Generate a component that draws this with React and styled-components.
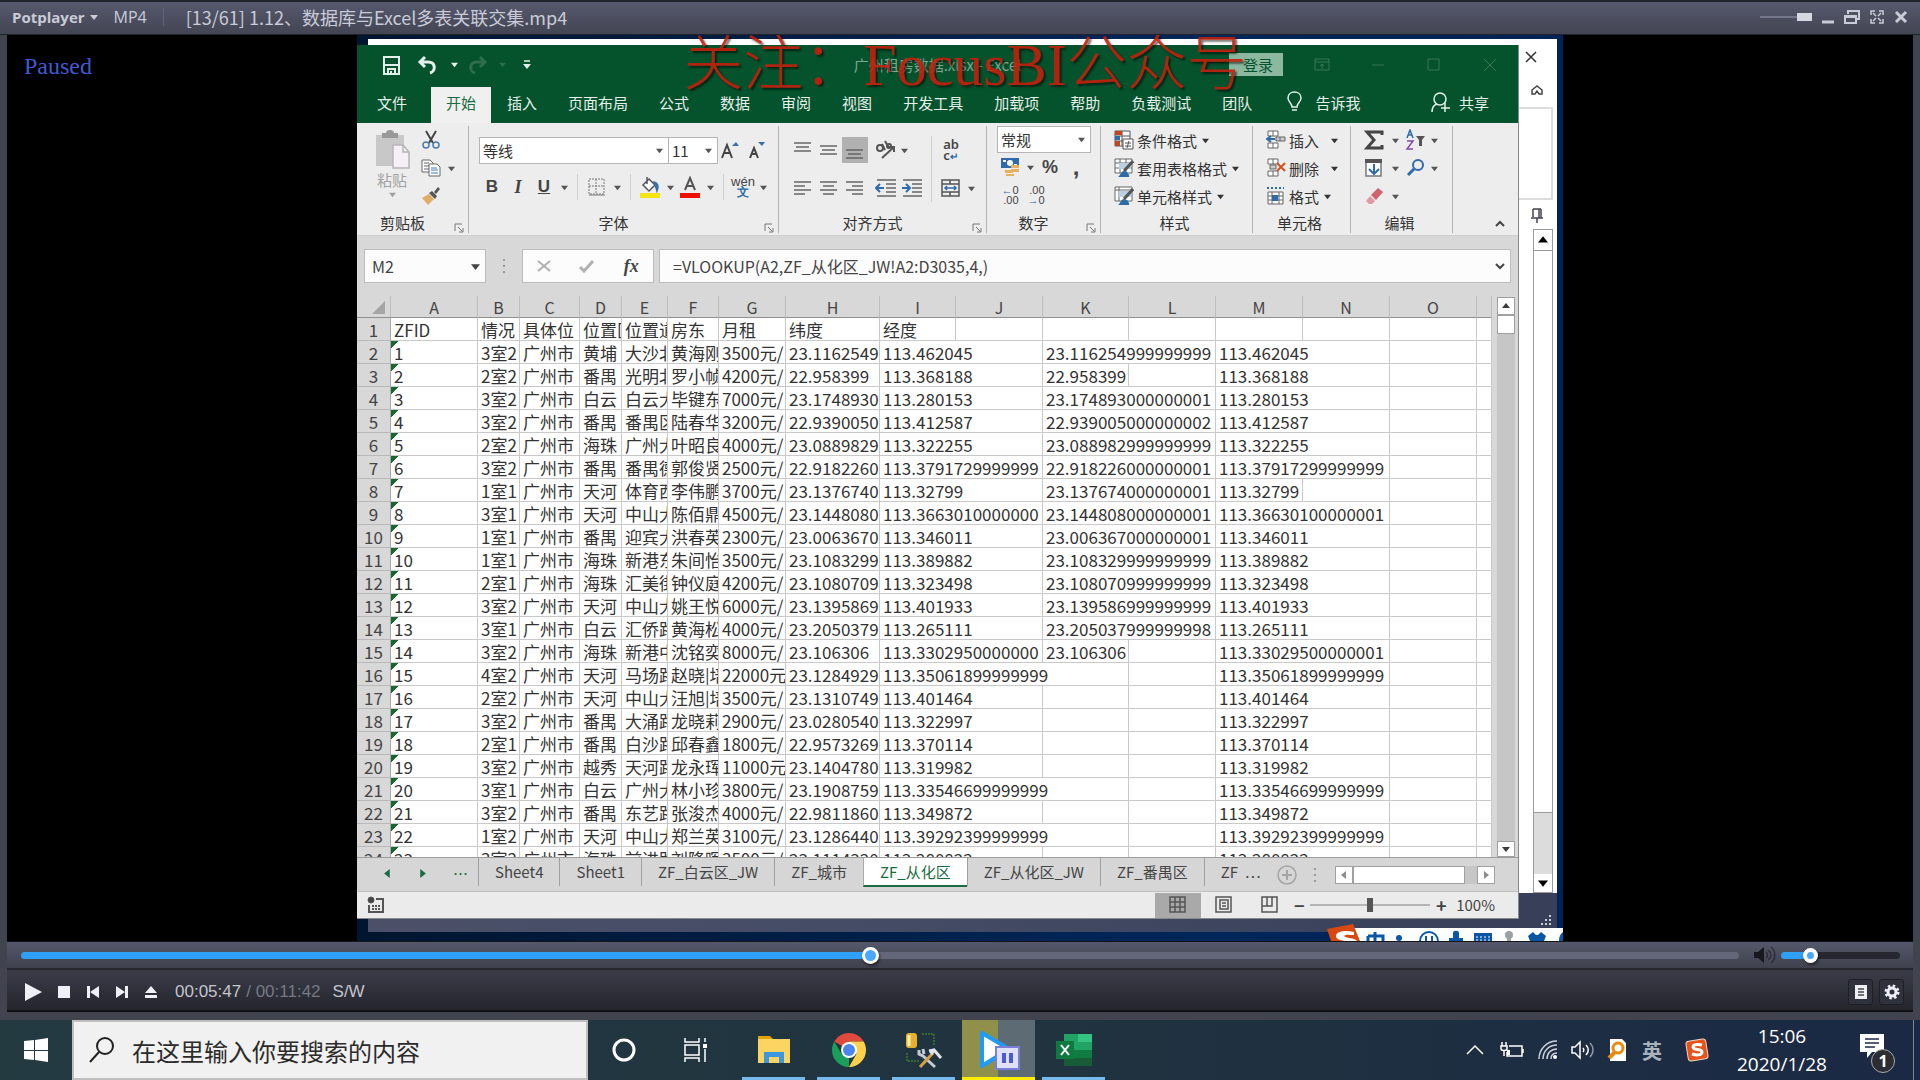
import React, { useState } from "react";
import styled, { createGlobalStyle } from "styled-components";

const GlobalStyle = createGlobalStyle`
  * {
    box-sizing: border-box;
  }

  body {
    margin: 0;
    background: #000;
    font-family: "Noto Sans CJK SC", "Noto Sans", sans-serif;
    font-size: 15px;
  }

  button,
  input,
  select {
    margin: 0;
    padding: 0;
    border: 0;
    background: none;
    color: inherit;
    font: inherit;
  }
`;

const Page = styled.div`
  display: flex;
  flex-direction: column;
  height: 100vh;
  overflow: hidden;
`;

/* ---------- Player ---------- */

const Player = styled.main`
  flex: 1;
  min-height: 0;
  display: flex;
  flex-direction: column;
  padding: 0 7px 8px;
  background: #41434f;
  border-top: 2px solid #22242c;
`;

const PlayerTitle = styled.header`
  display: flex;
  align-items: center;
  height: 33px;
  margin: 0 -7px;
  padding: 0 12px 2px;
  background: linear-gradient(#56596d, #434553);
  border-bottom: 1px solid #22232b;
  color: #c9cbd8;
  font-family: "Open Sans", "Noto Sans CJK SC", sans-serif;
`;

const BrandButton = styled.button`
  display: flex;
  align-items: center;
  gap: 5px;
  font-size: 15px;
  font-weight: 700;
`;

const Format = styled.span`
  margin-left: 16px;
  padding-right: 16px;
  border-right: 1px solid #5f6274;
  font-size: 16px;
  line-height: 18px;
`;

const FileName = styled.h1`
  flex: 1;
  margin: 0 0 0 22px;
  font-family: "Noto Sans CJK SC", sans-serif;
  font-size: 18px;
  font-weight: 400;
`;

const WindowButtons = styled.div`
  display: flex;
  align-items: center;
  gap: 10px;
`;

const PlainButton = styled.button`
  display: flex;
  align-items: center;
  justify-content: center;
`;

const Stage = styled.section`
  flex: 1;
  min-height: 0;
  display: grid;
  grid-template-columns: 350px minmax(0, 1fr) 350px;
  background: #000;
`;

const PlayState = styled.p`
  margin: 16px 0 0 17px;
  color: #4059cf;
  font-family: "Liberation Serif", serif;
  font-size: 24px;
  line-height: 30px;
`;

const SeekRow = styled.div`
  display: flex;
  align-items: center;
  height: 29px;
  padding: 0 13px 0 14px;
  background: linear-gradient(#55586b, #3f414d);
  border-top: 1px solid #15161b;
  border-bottom: 2px solid #25262e;
`;

const Range = styled.input`
  flex: ${(props) => (props.$grow ? 1 : "none")};
  width: ${(props) => props.$width || "auto"};
  height: 18px;
  appearance: none;
  cursor: pointer;

  &::-webkit-slider-runnable-track {
    height: ${(props) => props.$track}px;
    border-radius: 4px;
    background: linear-gradient(
      to right,
      ${(props) => props.$on} ${(props) => props.$fill}%,
      ${(props) => props.$off} ${(props) => props.$fill}%
    );
  }

  &::-webkit-slider-thumb {
    appearance: none;
    width: ${(props) => props.$thumb}px;
    height: ${(props) => props.$thumb}px;
    margin-top: ${(props) => (props.$track - props.$thumb) / 2}px;
    border: ${(props) => (props.$thumb > 15 ? 3 : 4)}px solid #fff;
    border-radius: 50%;
    background: #4aa8f8;
    box-shadow: 1px 2px 3px rgba(0, 0, 0, 0.5);
  }
`;

const VolumeIcon = styled.span`
  display: flex;
  margin: 0 5px 0 13px;
`;

const ControlRow = styled.div`
  display: flex;
  align-items: center;
  height: 42px;
  padding: 3px 9px 0 17px;
  background: linear-gradient(#3a3c48, #24252d);
  border-bottom: 2px solid #111216;
`;

const Transport = styled.div`
  display: flex;
  align-items: center;
  gap: 11px;

  button:first-child {
    margin-right: 2px;
  }
`;

const Clock = styled.div`
  flex: 1;
  display: flex;
  margin-left: 15px;
  color: #c3c4cc;
  font-family: "Liberation Sans", sans-serif;
  font-size: 17px;
`;

const Duration = styled.span`
  margin: 0 12px 0 5px;
  color: #777985;
`;

const PanelButton = styled(PlainButton)`
  width: 25px;
  height: 26px;
  margin-left: 6px;
  border: 1px solid #1e1f25;
  border-radius: 3px;
  background: #2f313c;
`;

/* ---------- Recorded desktop ---------- */

const Desktop = styled.div`
  display: grid;
  grid-template: minmax(0, 1fr) / minmax(0, 1fr);
  overflow: hidden;
  background: linear-gradient(to right, #00152f, #00275a 70%, #002357);
  position: relative;

  > * {
    grid-area: 1 / 1;
  }
`;

const BackWindow = styled.div`
  display: flex;
  flex-direction: column;
  margin: 4px 6px 9px 11px;
  background: #fff;
`;

const BackStrip = styled.div`
  flex: 1;
  align-self: flex-end;
  display: flex;
  flex-direction: column;
  align-items: flex-end;
  width: 38px;
  padding-right: 4px;
`;

const BackIcons = styled.div`
  display: flex;
  flex-direction: column;
  justify-content: space-between;
  width: 34px;
  height: 60px;
  padding: 12px 0 3px 6px;

  svg:last-child {
    margin-left: 6px;
  }
`;

const BackPanel = styled.div`
  width: 34px;
  height: 93px;
  margin: 8px 0;
  border: 2px solid #dcdcdc;
  border-left: 0;
`;

const PinSlot = styled.div`
  display: flex;
  padding-right: 5px;
`;

const BackScroll = styled.div`
  flex: 1;
  display: flex;
  flex-direction: column;
  width: 20px;
  margin-top: 5px;
  border: 1px solid #9b9b9b;
  background: #dcdcdc;
`;

const BackThumb = styled.div`
  flex: 1;
  margin-bottom: 61px;
  border: 1px solid #9b9b9b;
  border-width: 1px 0;
  background: #fff;
`;

const BackStatus = styled.div`
  display: flex;
  justify-content: flex-end;
  height: 39px;
  padding: 22px 4px 0;
  background: linear-gradient(to right, #4b5068, #454c66 40%, #384059);
`;

const ScrollButton = styled(PlainButton)`
  flex: none;
  width: 18px;
  height: ${(props) => props.$h || 18}px;
  border: ${(props) => (props.$flat ? 0 : 1)}px solid #a0a0a0;
  background: #fff;
`;

const Watermark = styled.div`
  z-index: 2;
  justify-self: center;
  align-self: start;
  padding-left: 10px;
  color: #c3200c;
  font-family: "Liberation Serif", "Noto Sans CJK SC", serif;
  font-size: 60px;
  font-weight: 300;
  line-height: 60px;
  text-shadow: 2px 2px 2px rgba(0, 0, 0, 0.6);
  white-space: nowrap;
  opacity: 0.9;
  pointer-events: none;
`;

const ImeBar = styled.div`
  position: absolute;
  right: 0;
  bottom: 0;
  display: flex;
  align-items: flex-start;
  width: 236px;
  height: 17px;
  overflow: hidden;
`;

/* ---------- Spreadsheet window ---------- */

const Excel = styled.section`
  z-index: 1;
  display: flex;
  flex-direction: column;
  min-width: 0;
  margin: 10px 44px 22px 0;
  border-right: 1px solid #8a8a8a;
  border-bottom: 1px solid #8a8a8a;
  background: #d8d8d8;
  color: #3c3c3c;
`;

const GreenBar = styled.div`
  background: #04532d;
  color: #e6f0ea;
`;

const ExcelTitle = styled.div`
  display: grid;
  grid-template-columns: 1fr auto 1fr;
  align-items: center;
  height: 42px;
  padding-bottom: 3px;
`;

const QuickAccess = styled.div`
  display: flex;
  align-items: center;
  padding-left: 24px;
`;

const DocTitle = styled.h2`
  margin: 0;
  color: #7da690;
  font-size: 15px;
  font-weight: 400;
`;

const ExcelControls = styled.div`
  display: flex;
  align-items: center;
  justify-content: flex-end;
`;

const LoginButton = styled.button`
  width: 54px;
  height: 23px;
  margin-right: 11px;
  padding-left: 4px;
  background: #8db8a0;
  color: #04532d;
  font-size: 15px;
  line-height: 22px;
`;

const ChromeButton = styled(PlainButton)`
  width: 56px;
  color: #3a7757;
`;

const RibbonTabs = styled.nav`
  display: flex;
  align-items: stretch;
  gap: 1px;
  height: 36px;
  padding: 0 14px 0 5px;
`;

const RibbonTab = styled.button`
  display: flex;
  align-items: center;
  gap: 8px;
  padding: 0 15px 6px;
  margin-right: ${(props) => props.$after || 0}px;
  margin-left: ${(props) => props.$before || 0};
  background: ${(props) => (props.$active ? "#f0f0f0" : "transparent")};
  color: ${(props) => (props.$active ? "#1a6b41" : "#e6f0ea")};
  white-space: nowrap;
`;

const Ribbon = styled.div`
  display: flex;
  height: 113px;
  padding: 3px 0 2px;
  background: #ededed;
  border-bottom: 1px solid #cfcfcf;
`;

const Group = styled.div`
  flex: none;
  display: flex;
  flex-direction: column;
  width: ${(props) => props.$width}px;
  border-right: 1px solid #b4b4b4;
`;

const GroupBody = styled.div`
  flex: 1;
  display: flex;
  flex-direction: ${(props) => (props.$row ? "row" : "column")};
  gap: ${(props) => props.$gap || 0}px;
  padding: ${(props) => props.$pad || "0 0 0 10px"};
`;

const GroupLabel = styled.div`
  display: flex;
  height: 20px;
  padding-right: 4px;
  color: #333;
  line-height: 20px;

  svg {
    flex: none;
    align-self: flex-end;
    margin-left: 6px;
  }

  span {
    flex: 1;
    text-align: center;
  }
`;

const Stack = styled.div`
  display: flex;
  flex-direction: column;
  gap: ${(props) => props.$gap || 0}px;
`;

const ToolRow = styled.div`
  display: flex;
  align-items: center;
  height: ${(props) => props.$h || 28}px;
`;

const Tool = styled(PlainButton)`
  width: 26px;
  height: 26px;
  background: ${(props) => (props.$active ? "#b1b1b1" : "transparent")};
  color: #444;
  font-family: "Liberation Sans", sans-serif;
  font-size: ${(props) => props.$size || 17}px;
  font-weight: ${(props) => (props.$bold ? 700 : 400)};
  font-style: ${(props) => (props.$italic ? "italic" : "normal")};
  text-decoration: ${(props) => (props.$underline ? "underline" : "none")};
`;

const SerifTool = styled(Tool)`
  font-family: "Liberation Serif", serif;
  font-size: 18px;
`;

const CaretSlot = styled.button`
  display: inline-flex;
  align-items: center;
  justify-content: center;
  flex: none;
  width: ${(props) => props.$w || 14}px;
  color: ${(props) => props.$color || "#555"};
`;

const WideTool = styled.button`
  display: flex;
  align-items: center;
  height: 28px;
  color: #333;
  white-space: nowrap;

  > svg:first-child {
    margin: 0 3px;
  }

  > svg:last-child {
    margin-left: ${(props) => props.$push || 5}px;
  }
`;

const ToolSep = styled.div`
  flex: none;
  width: 1px;
  height: ${(props) => props.$h || 26}px;
  margin: 0 6px;
  background: #cfcfcf;
`;

const ToolGap = styled.div`
  width: 5px;
`;

const PasteButton = styled.button`
  display: flex;
  flex-direction: column;
  align-items: center;
  width: 52px;
  padding-top: 3px;
  color: #a2a2a2;
  line-height: 22px;
`;

const SelectBox = styled.div`
  display: grid;
  width: ${(props) => props.$width}px;
  height: 27px;
  border: 1px solid #b5b5b5;
  margin-right: -1px;
  background: #fff;

  > * {
    grid-area: 1 / 1;
  }

  select {
    padding-left: 3px;
    appearance: none;
    color: #333;
    outline: none;
  }

  svg {
    align-self: center;
    justify-self: end;
    margin-right: 5px;
    color: #555;
    pointer-events: none;
  }
`;

const FormulaRow = styled.div`
  display: flex;
  height: 60px;
  padding: 13px 7px;
  color: #444;
  font-size: 16px;
`;

const FormulaBox = styled.div`
  flex: ${(props) => (props.$grow ? 1 : "none")};
  width: ${(props) => (props.$grow ? "auto" : `${props.$width}px`)};
  display: flex;
  align-items: center;
  justify-content: space-around;
  border: 1px solid #bcbcbc;
  background: #fcfcfc;

  input {
    flex: 1;
    min-width: 0;
    padding-left: ${(props) => (props.$grow ? 13 : 7)}px;
    outline: none;
  }

  svg {
    flex: none;
    margin-right: ${(props) => (props.$tools ? 0 : 5)}px;
  }
`;

const Grip = styled.span`
  display: flex;
  align-items: center;
  justify-content: center;
  width: 36px;
  color: #9a9a9a;
`;

const SheetArea = styled.div`
  flex: 1;
  min-height: 0;
  display: flex;
  overflow: hidden;
  border-bottom: 1px solid #9d9d9d;
`;

const SheetClip = styled.div`
  flex: 1;
  min-width: 0;
  overflow: hidden;
`;

const Sheet = styled.table`
  width: 100%;
  table-layout: fixed;
  border-collapse: separate;
  border-spacing: 0;
  color: #333;
  font-size: 17px;

  th,
  td {
    height: 23px;
    padding: 2px 0 0;
    overflow: hidden;
    line-height: 20px;
    white-space: nowrap;
  }

  th {
    border-right: 1px solid #a8a8a8;
    border-bottom: 1px solid #b9b9b9;
    background: #d8d8d8;
    color: #444;
    font-weight: 400;
    text-align: center;
  }

  thead th {
    height: 22px;
    border-right-color: #bdbdbd;
    border-bottom-color: #8f8f8f;
    font-size: 16px;
    line-height: 19px;
  }

  td {
    padding-left: 3px;
    border-right: 1px solid #c9c9c9;
    border-bottom: 1px solid #c9c9c9;
    background: #fff;
  }
`;

// number stored as text: small green corner
const IdCell = styled.td`
  && {
    background: linear-gradient(135deg, #16682f 50%, transparent 50%) 0 0 / 8px 8px no-repeat #fff;
  }
`;

const SheetScroll = styled.div`
  display: flex;
  flex-direction: column;
  width: 18px;
  margin: 1px 3px 0 5px;
  background: #c6c6c6;
`;

const SheetThumb = styled.div`
  height: 19px;
  margin-bottom: auto;
  border: 1px solid #a0a0a0;
  background: #fff;
`;

const TabBar = styled.div`
  display: flex;
  height: 34px;
  border-bottom: 1px solid #c0c0c0;
  background: #d6d6d6;
  color: #444;
`;

const TabNav = styled.div`
  flex: none;
  display: flex;
  align-items: center;
  justify-content: flex-end;
  gap: 26px;
  width: 121px;
  height: 30px;
  padding: 0 10px 0 0;
  color: #1a6b41;
`;

const SheetTab = styled.button`
  flex: none;
  height: 29px;
  padding: 0 16px;
  border-left: 1px solid ${(props) => (props.$active ? "#aaa" : "#9f9f9f")};
  border-bottom: 2px solid ${(props) => (props.$active ? "#1a6b41" : "transparent")};
  background: ${(props) => (props.$active ? "#fff" : "transparent")};
  color: ${(props) => (props.$active ? "#1a6b41" : "#444")};
  line-height: 27px;
  white-space: nowrap;
`;

const TabTail = styled.div`
  flex: 1;
  display: flex;
  align-items: center;
  height: 34px;
  color: #8d8d8d;
`;

const HScroll = styled.div`
  display: flex;
  width: 160px;
  height: 18px;
  margin: 0 23px 0 auto;
  background: #c6c6c6;
`;

const HThumb = styled.div`
  flex: 1;
  margin-right: 12px;
  border: 1px solid #a0a0a0;
  background: #fff;
`;

const StatusBar = styled.div`
  display: flex;
  align-items: center;
  height: 26px;
  padding: 0 23px 0 10px;
  background: #ebebeb;
  color: #444;
`;

const ViewButton = styled(PlainButton)`
  width: 46px;
  height: 25px;
  margin-left: ${(props) => (props.$first ? "auto" : 0)};
  background: ${(props) => (props.$active ? "#a9a9a9" : "transparent")};
`;

const ZoomRange = styled.input`
  width: 120px;
  margin: 0 5px;
  height: 16px;
  appearance: none;

  &::-webkit-slider-runnable-track {
    height: 2px;
    background: #b5b5b5;
  }

  &::-webkit-slider-thumb {
    appearance: none;
    width: 6px;
    height: 14px;
    margin-top: -6px;
    background: #555;
  }
`;

/* ---------- Taskbar ---------- */

const Taskbar = styled.footer`
  display: flex;
  height: 60px;
  background: linear-gradient(to right, #233a41, #20333f 55%, #1b2945);
  color: #fff;
`;

const TaskButton = styled(PlainButton)`
  width: 72px;
`;

const SearchBox = styled.label`
  display: flex;
  align-items: center;
  gap: 18px;
  width: 516px;
  padding-left: 15px;
  border: 2px solid #bfbfbf;
  background: #f1f1f1;
  color: #222;

  input {
    flex: 1;
    font-size: 24px;
    outline: none;
  }

  input::placeholder {
    color: #2b2b2b;
    opacity: 1;
  }
`;

const Apps = styled.div`
  display: flex;
  gap: 2px;
  margin-left: 5px;
`;

const AppButton = styled(PlainButton)`
  width: 73px;
  padding-top: 3px;
  background: ${(props) =>
    props.$active ? "linear-gradient(to right, #8f914b 49%, #5d6b75 49%)" : "transparent"};

  /* running indicator */
  border-bottom: 3px solid transparent;
  border-image: ${(props) =>
    props.$active
      ? "linear-gradient(#ffee00, #ffee00) 1"
      : "linear-gradient(to right, transparent 8%, #76b9ed 8%, #76b9ed 92%, transparent 92%) 1"};
`;

const Tray = styled.div`
  display: flex;
  align-items: center;
  margin-left: auto;
`;

const TrayButton = styled(PlainButton)`
  width: ${(props) => props.$w || 36}px;
  height: 60px;
`;

const ImeMode = styled.span`
  color: #a9b2bd;
  font-size: 20px;
  font-weight: 700;
`;

const DateTime = styled.button`
  width: 116px;
  font-family: "Open Sans", sans-serif;
  font-size: 19px;
  line-height: 28px;
`;

const Notice = styled(PlainButton)`
  position: relative;
  width: 74px;
  height: 60px;
  margin-right: 6px;
  padding: 0 10px 6px 0;
  border-right: 1px solid #7d8796;
`;

const Badge = styled.span`
  position: absolute;
  top: 29px;
  left: 31px;
  width: 24px;
  height: 24px;
  border: 1px solid #aaa;
  border-radius: 50%;
  background: #2b2d33;
  font-family: "Open Sans", sans-serif;
  font-size: 16px;
  font-weight: 700;
  line-height: 22px;
`;

/* ---------- Icons ---------- */

const Icon = ({ w = 20, h = w, box, children, ...rest }) => (
  <svg
    width={w}
    height={h}
    viewBox={box || `0 0 ${w} ${h}`}
    fill="none"
    stroke="currentColor"
    strokeWidth="1.5"
    aria-hidden="true"
    {...rest}
  >
    {children}
  </svg>
);

const Tri = ({ dir = "down", size = 7 }) => {
  const turn = { down: 0, left: 90, up: 180, right: 270 }[dir];
  return (
    <Icon w={size} box="0 0 8 8">
      <path d="M0 2h8L4 7z" fill="currentColor" stroke="none" transform={`rotate(${turn} 4 4)`} />
    </Icon>
  );
};

const Caret = ({ w, color }) => (
  <CaretSlot $w={w} $color={color} aria-label="更多">
    <Tri size={7} />
  </CaretSlot>
);

const Launcher = () => (
  <Icon w={10} stroke="#777" strokeWidth="1">
    <path d="M1 8V1h7M4 4l4 4M9 5v4H5" />
  </Icon>
);

const Lines = ({ rows }) => (
  <Icon w={20} stroke="#666">
    {rows.map(([x1, x2, y]) => (
      <path key={y} d={`M${x1} ${y}H${x2}`} />
    ))}
  </Icon>
);

const Chevron = ({ up }) => (
  <Icon w={10} stroke="#444" strokeWidth="2">
    <path d={up ? "M1 7l4-4 4 4" : "M1 3l4 4 4-4"} />
  </Icon>
);

const SaveIcon = () => (
  <Icon w={22} stroke="#e6f0ea" strokeWidth="2">
    <path d="M3 3h15v17H3zM3 11h15M7 20v-5h7v5M10 17v3" />
  </Icon>
);

const UndoIcon = ({ flip, color }) => (
  <Icon w={20} stroke={color} strokeWidth="3" transform={flip ? "scale(-1 1)" : undefined}>
    <path d="M8 2L3 7l5 5M3 7h8c8 0 8 9 2 11" />
  </Icon>
);

const PasteIcon = () => (
  <Icon w={36} h={40} stroke="none">
    <path d="M2 6h28v31H2z" fill="#c8c8c8" />
    <path d="M8 4h4c0-4 8-4 8 0h4v5H8z" fill="#999" />
    <path d="M19 16h10l6 7v16H19z" fill="#f4f0f6" stroke="#b5b5b5" />
    <path d="M29 16v7h6" stroke="#b5b5b5" />
  </Icon>
);

const CutIcon = () => (
  <Icon w={20}>
    <path d="M5 1l7 12M15 1L8 13" stroke="#444" strokeWidth="2" />
    <circle cx="5" cy="15" r="3" stroke="#4a7ab5" />
    <circle cx="15" cy="15" r="3" stroke="#4a7ab5" />
  </Icon>
);

const CopyIcon = () => (
  <Icon w={20} stroke="#666" strokeWidth="1">
    <path d="M1 2h8l3 3v9H1zM3 5h5M3 8h5M3 11h5" fill="#fff" />
    <path d="M8 6h8l3 3v9H8z" fill="#fff" />
    <path d="M10 10h6M10 12h7M10 15h7" stroke="#3c7ebf" />
  </Icon>
);

const BrushIcon = () => (
  <Icon w={20} stroke="none">
    <path d="M1 12l7-4 5 5-6 6z" fill="#e1ad69" />
    <path d="M8 7l6 6 2-3-5-5zM13 6l4-5 2 2-4 5z" fill="#555" />
  </Icon>
);

const GrowFont = ({ small }) => (
  <Icon w={22}>
    <path d={small ? "M5 18l4-10 4 10M6 14h6" : "M3 18L8 5l5 13M5 13h7"} stroke="#444" strokeWidth="2" />
    <path d={small ? "M13 2h7l-3 4z" : "M13 6h7l-3-4z"} fill="#3c6ea8" stroke="none" />
  </Icon>
);

const BorderIcon = () => (
  <Icon w={18} stroke="#777" strokeWidth="1">
    <path d="M1 1h15v15H1zM8 1v15M1 8h15" strokeDasharray="2 1" />
    <path d="M1 17h16" stroke="#777" />
  </Icon>
);

const FillIcon = () => (
  <Icon w={22}>
    <path d="M4 9l6-6 6 6-6 6zM8 1v7" stroke="#555" fill="#fff" />
    <path d="M15 6c4 1 5 4 3 9-1-4-2-5-3-9z" fill="#3c6ea8" stroke="#3c6ea8" />
    <path d="M1 17h20v5H1z" fill="#f5e314" stroke="none" />
  </Icon>
);

const FontColorIcon = () => (
  <Icon w={22}>
    <path d="M6 14l5-12 5 12M8 10h6" stroke="#555" strokeWidth="2" />
    <path d="M1 17h20v5H1z" fill="#ee1100" stroke="none" />
  </Icon>
);

const PinyinTool = styled.span`
  display: block;
  font-size: 13px;
  font-weight: 500;
  line-height: 11px;

  b {
    display: block;
    color: #2e6bab;
    font-size: 12px;
  }
`;

const OrientIcon = () => (
  <Icon w={22} stroke="#555" strokeWidth="2">
    <circle cx="5" cy="9" r="3" />
    <path d="M7 5l3 6M10 2l4 7M7 19L19 8M14 8h5v5" />
    <circle cx="14" cy="7" r="2" />
  </Icon>
);

const WrapTool = styled.span`
  font-family: "Noto Sans", sans-serif;
  font-size: 13px;
  font-weight: 600;
  line-height: 11px;
  text-align: left;

  i {
    color: #2e6bab;
    font-style: normal;
    font-size: 10px;
  }
`;

const IndentIcon = ({ out }) => (
  <Icon w={22}>
    <path d="M2 3h19M11 7h10M11 11h10M11 15h10M2 19h19" stroke="#666" />
    <path d={out ? "M9 11H2M5 7l-4 4 4 4" : "M1 11h7M5 7l4 4-4 4"} stroke="#2e6bab" strokeWidth="2" />
  </Icon>
);

const MergeIcon = () => (
  <Icon w={20} stroke="#555">
    <path d="M1 2h17v16H1zM1 6h17M1 14h17M9 2v4M9 14v4" />
    <path d="M4 10h11M6 8l-2 2 2 2M13 8l2 2-2 2" stroke="#2e6bab" />
  </Icon>
);

const CurrencyIcon = () => (
  <Icon w={20} stroke="none">
    <path d="M1 1h18v10H1z" fill="#2e6bab" />
    <circle cx="10" cy="6" r="3" fill="#fff" />
    <path d="M3 3h3v2H3zM14 7h3v2h-3z" fill="#fff" />
    <path d="M11 8h8v3h-8zM11 12h8v3h-8zM5 13h8v3H5zM6 17h8v2H6z" fill="#e8b15f" />
  </Icon>
);

const DecimalTool = styled.span`
  font-family: "Liberation Sans", sans-serif;
  font-size: 11px;
  line-height: 10px;
  text-align: right;

  b {
    color: #2e6bab;
  }
`;

const CondIcon = () => (
  <Icon w={20} stroke="#555" strokeWidth="1">
    <path d="M1 1h15v15H1zM1 6h15M1 11h15M8 1v15" fill="#fff" />
    <path d="M1 1h7v4H1zM1 11h5v5H1z" fill="#c1461e" stroke="none" />
    <path d="M1 6h5v4H1z" fill="#2e6bab" stroke="none" />
    <path d="M9 9h10v10H9zM11 13h6M11 16h6M15 11l-2 7" fill="#fff" />
  </Icon>
);

const StyleIcon = ({ cell }) => (
  <Icon w={20} stroke="#666" strokeWidth="1">
    <path d="M1 1h17v14H1z" fill="#fff" />
    <path d={cell ? "M5 1v14M1 4h17" : "M1 5h17M1 10h17M6 1v14M12 1v14"} />
    <path d="M5 5h12v6H5z" fill="#b9cfe2" stroke="none" />
    <path d="M19 3l-9 10" stroke="#555" strokeWidth="3" />
    <path d="M4 19c2-1 3-6 6-6s6 4 5 6z" fill="#2e6bab" stroke="none" />
  </Icon>
);

const CellsIcon = ({ kind }) => (
  <Icon w={20} stroke="#666" strokeWidth="1">
    {kind === "format" ? (
      <>
        <path d="M1 2h17" stroke="#2e6bab" strokeWidth="2" strokeDasharray="2 2" />
        <path d="M2 6h15v12H2zM2 10h15M2 14h15M6 6v12M13 6v12" fill="#fff" />
        <path d="M6 9h6v6H6z" fill="#2e6bab" stroke="none" />
      </>
    ) : (
      <>
        <path d="M2 1h10v5H2zM7 1v5M2 13h10v5H2zM7 13v5" fill="#fff" />
        {kind === "insert" ? (
          <>
            <path d="M10 7h9v4h-9zM14 7v4" fill="#ccc" />
            <path d="M9 9H1M5 6L1 9l4 3" stroke="#2e6bab" strokeWidth="2" />
          </>
        ) : (
          <>
            <path d="M4 7h6v4H4z" fill="#ccc" />
            <path d="M11 5l8 8M19 5l-8 8" stroke="#d2521f" strokeWidth="2" />
          </>
        )}
      </>
    )}
  </Icon>
);

const SigmaIcon = () => (
  <Icon w={20} stroke="#444" strokeWidth="3">
    <path d="M18 5V2H3l7 8-7 8h15v-3" />
  </Icon>
);

const SortIcon = () => (
  <Icon w={22}>
    <path d="M2 9l3-8 3 8M3 6h4" stroke="#2e6bab" />
    <path d="M2 12h6l-6 8h6" stroke="#8449a5" />
    <path d="M11 7h9l-3 4v6h-3v-6z" fill="#555" stroke="none" />
  </Icon>
);

const FillDownIcon = () => (
  <Icon w={20} stroke="#777">
    <path d="M2 2h15v16H2z" fill="#fff" />
    <path d="M1 1h17v4H1z" fill="#555" stroke="none" />
    <path d="M10 6v10M5 11l5 5 5-5" stroke="#2e6bab" strokeWidth="2" />
  </Icon>
);

const FindIcon = () => (
  <Icon w={20} stroke="#2e6bab" strokeWidth="2">
    <circle cx="12" cy="7" r="5" />
    <path d="M8 11l-6 6" strokeWidth="3" />
  </Icon>
);

const EraserIcon = () => (
  <Icon w={20} stroke="none">
    <path d="M7 9l7-7 5 4-7 8z" fill="#d0626e" />
    <path d="M6 10l5 5-3 3H5l-3-3z" fill="#e29aa2" />
  </Icon>
);

const BulbIcon = () => (
  <Icon w={18} h={22} stroke="#e6f0ea">
    <path d="M6 16c0-4-4-5-4-9 0-8 13-8 13 0 0 4-4 5-4 9zM6 19h5" />
  </Icon>
);

const ShareIcon = () => (
  <Icon w={20} h={22} stroke="#e6f0ea">
    <circle cx="9" cy="8" r="6" />
    <path d="M1 21c0-5 2-7 5-8M14 12v9M10 17h9" />
  </Icon>
);

const SogouIcon = ({ size = 24 }) => (
  <Icon w={size} box="0 0 24 24">
    <rect x="2" y="2" width="20" height="20" rx="3" fill="#e5531a" stroke="#f5d3c4" strokeWidth="1" transform="rotate(-9 12 12)" />
    <path d="M17 7c-3-1-9-1-9 2 0 4 9 1 9 5 0 4-7 3-10 2" stroke="#fff" strokeWidth="3" />
  </Icon>
);

const ImeStrip = () => (
  <Icon w={236} h={17} stroke="none">
    <path d="M14 4h222v13H14z" fill="#fff" />
    <path d="M0 5l26-5 7 17H4z" fill="#d9480f" />
    <path d="M27 8c-8-2-18-1-18 4 0 3 4 4 8 5h13c-3-4-10-2-13-5 2-2 6-1 10-1z" fill="#fff" />
    <path d="M41 12h15v5M48 8v9M41 12v5" stroke="#0b57a6" strokeWidth="3" />
    <circle cx="72" cy="14" r="3" fill="#0b57a6" />
    <circle cx="102" cy="17" r="9" stroke="#0b57a6" strokeWidth="2" />
    <path d="M99 12v5M105 12v5" stroke="#0b57a6" strokeWidth="2" />
    <path d="M126 9c0-3 6-3 6 0v8h-6zM122 14h14v3h-14z" fill="#0b57a6" />
    <path d="M147 9h18v8h-18z" fill="#0b57a6" />
    <path d="M149 13h14M149 16h14" stroke="#fff" strokeWidth="1" strokeDasharray="2 2" />
    <circle cx="182" cy="11" r="4" fill="#9aa0a8" />
    <path d="M180 14h4v3h-4z" fill="#9aa0a8" />
    <path d="M201 12l5-4 3 3h2l3-3 5 4-2 5h-14z" fill="#0b57a6" />
    <path d="M236 8c-3 2-4 5-4 9h4z" fill="#0b57a6" />
  </Icon>
);

const ExplorerIcon = () => (
  <Icon w={34} h={34} stroke="none">
    <path d="M1 3h12l3 3h1v5H1z" fill="#e2a200" />
    <path d="M1 6h32v24H1z" fill="#fcd462" />
    <path d="M7 19h20v11h-5v-6H12v6H7z" fill="#3d97dd" />
  </Icon>
);

const ChromeIcon = () => (
  <Icon w={34} h={34} stroke="none">
    <path d="M17 17L2.300 8.500A17 17 0 0 1 31.700 8.500H17z" fill="#de4a3e" />
    <path d="M17 17v17A17 17 0 0 1 2.300 8.500L9.600 21z" fill="#1a9f5b" />
    <path d="M17 8.500h14.700A17 17 0 0 1 17 34l7.400-13z" fill="#fdd04b" />
    <circle cx="17" cy="17" r="8" fill="#fff" />
    <circle cx="17" cy="17" r="6" fill="#4a86ee" />
  </Icon>
);

const DbToolsIcon = () => (
  <Icon w={38} h={38}>
    <rect x="1" y="2" width="11" height="15" rx="3" fill="#e5b030" stroke="none" />
    <path d="M4 4v11" stroke="#fff2a8" strokeWidth="3" />
    <path d="M17 3h12v12M2 22v8h12" stroke="#3b7a2f" strokeDasharray="2 1" />
    <path d="M14 19v4l4 2 12 11M18 18l1 5" stroke="#c3cad3" strokeWidth="3" />
    <path d="M15 36l13-14" stroke="#d6a046" strokeWidth="3" />
    <path d="M24 20l5-1 7 8M29 19l-3 4" stroke="#dfe5ec" strokeWidth="3" />
  </Icon>
);

const PotIcon = () => (
  <Icon w={42} h={40}>
    <path d="M4 3l27 16L4 36z" fill="#fff" stroke="#1f9bf5" strokeWidth="4" strokeLinejoin="round" />
    <path d="M18 17h23v22H18z" fill="#dfe1fb" stroke="#7b7ed6" strokeWidth="2" />
    <path d="M26 23v10M33 23v10" stroke="#4b5ad8" strokeWidth="4" />
  </Icon>
);

const ExcelIcon = () => (
  <Icon w={36} h={34} stroke="none">
    <path d="M8 1h28v32H8z" fill="#21a366" />
    <path d="M22 1h14v8H22z" fill="#33c481" />
    <path d="M8 17h28v8H8z" fill="#107c41" />
    <path d="M8 25h28v8H8z" fill="#185c37" />
    <path d="M0 8h18v18H0z" fill="#0f7a40" />
    <path d="M5 12l8 10M13 12L5 22" stroke="#fff" strokeWidth="2" />
  </Icon>
);

/* ---------- Data ---------- */

const COLUMNS = [
  ["A", 87],
  ["B", 42],
  ["C", 60],
  ["D", 42],
  ["E", 46],
  ["F", 51],
  ["G", 67],
  ["H", 94],
  ["I", 76],
  ["J", 87],
  ["K", 86],
  ["L", 87],
  ["M", 87],
  ["N", 87],
  ["O", 87],
];

// id, 户型, 区, 位置, 房东, 月租, 纬度, 经度, K, M
const ROWS = [
  ["1", "3室2", "黄埔", "大沙北", "黄海刚", "3500元/", "23.1162549", "113.462045", "23.116254999999999", "113.462045"],
  ["2", "2室2", "番禺", "光明北", "罗小帧", "4200元/", "22.958399", "113.368188", "22.958399", "113.368188"],
  ["3", "3室2", "白云", "白云大", "毕键东", "7000元/", "23.1748930", "113.280153", "23.174893000000001", "113.280153"],
  ["4", "3室2", "番禺", "番禺区", "陆春华", "3200元/", "22.9390050", "113.412587", "22.939005000000002", "113.412587"],
  ["5", "2室2", "海珠", "广州大", "叶昭良", "4000元/", "23.0889829", "113.322255", "23.088982999999999", "113.322255"],
  ["6", "3室2", "番禺", "番禺德", "郭俊贤", "2500元/", "22.9182260", "113.3791729999999", "22.918226000000001", "113.37917299999999"],
  ["7", "1室1", "天河", "体育西", "李伟鹏", "3700元/", "23.1376740", "113.32799", "23.137674000000001", "113.32799"],
  ["8", "3室1", "天河", "中山大", "陈佰鼎", "4500元/", "23.1448080", "113.3663010000000", "23.144808000000001", "113.36630100000001"],
  ["9", "1室1", "番禺", "迎宾大", "洪春英", "2300元/", "23.0063670", "113.346011", "23.006367000000001", "113.346011"],
  ["10", "1室1", "海珠", "新港东", "朱间怡", "3500元/", "23.1083299", "113.389882", "23.108329999999999", "113.389882"],
  ["11", "2室1", "海珠", "汇美街", "钟仪庭", "4200元/", "23.1080709", "113.323498", "23.108070999999999", "113.323498"],
  ["12", "3室2", "天河", "中山大", "姚王悦", "6000元/", "23.1395869", "113.401933", "23.139586999999999", "113.401933"],
  ["13", "3室1", "白云", "汇侨路", "黄海松", "4000元/", "23.2050379", "113.265111", "23.205037999999998", "113.265111"],
  ["14", "3室2", "海珠", "新港中", "沈铭奕", "8000元/", "23.106306", "113.3302950000000", "23.106306", "113.33029500000001"],
  ["15", "4室2", "天河", "马场路", "赵晓|培", "22000元", "23.1284929", "113.35061899999999", "", "113.35061899999999"],
  ["16", "2室2", "天河", "中山大", "汪旭|培", "3500元/", "23.1310749", "113.401464", "", "113.401464"],
  ["17", "3室2", "番禺", "大涌路", "龙晓莉", "2900元/", "23.0280540", "113.322997", "", "113.322997"],
  ["18", "2室1", "番禺", "白沙路", "邱春鑫", "1800元/", "22.9573269", "113.370114", "", "113.370114"],
  ["19", "3室2", "越秀", "天河路", "龙永珲", "11000元", "23.1404780", "113.319982", "", "113.319982"],
  ["20", "3室1", "白云", "广州大", "林小珍", "3800元/", "23.1908759", "113.33546699999999", "", "113.33546699999999"],
  ["21", "3室2", "番禺", "东艺路", "张浚杰", "4000元/", "22.9811860", "113.349872", "", "113.349872"],
  ["22", "1室2", "天河", "中山大", "郑兰英", "3100元/", "23.1286440", "113.39292399999999", "", "113.39292399999999"],
  ["23", "3室2", "海珠", "前进路", "刘隆晖", "3500元/", "23.1114320", "113.280822", "", "113.280822"],
];

const HEADINGS = ["ZFID", "情况", "具体位", "位置区", "位置道", "房东", "月租", "纬度", "经度", "", "", "", "", "", "", ""];

const MENU = ["插入", "页面布局", "公式", "数据", "审阅", "视图", "开发工具", "加载项", "帮助", "负载测试", "团队"];

const SHEETS = ["Sheet4", "Sheet1", "ZF_白云区_JW", "ZF_城市", "ZF_从化区", "ZF_从化区_JW", "ZF_番禺区"];

// A long value runs on over the empty cells to its right
const spill = (value, empty, limit) => {
  if (value.length <= limit) return [<td key="v">{value}</td>, ...Array.from({ length: empty }, (_, i) => <td key={i} />)];
  return [
    <td key="v" colSpan={empty + 1}>
      {value}
    </td>,
  ];
};

const DataRow = ({ index, row }) => {
  const [id, rooms, area, place, owner, rent, lat, lng, k, m] = row;
  const wide = !k && lng.length > 16;
  return (
    <tr>
      <th scope="row">{index}</th>
      <IdCell>{id}</IdCell>
      <td>{rooms}</td>
      <td>广州市</td>
      <td>{area}</td>
      <td>{place}</td>
      <td>{owner}</td>
      <td>{rent}</td>
      <td>{lat}</td>
      <td colSpan={wide ? 3 : 2}>{lng}</td>
      {wide ? <td /> : spill(k, 1, 9)}
      {spill(m, 1, 9)}
      <td />
      <td />
    </tr>
  );
};

const SheetTable = () => (
  <SheetArea>
    <SheetClip>
      <Sheet>
        <colgroup>
          <col width="34" />
          {COLUMNS.map(([name, width]) => (
            <col key={name} width={width} />
          ))}
          <col />
        </colgroup>
        <thead>
          <tr>
            <th aria-label="全选">
              <Icon w={30} h={18} stroke="none" display="block">
                <path d="M28 2v13H15z" fill="#a5a5a5" />
              </Icon>
            </th>
            {COLUMNS.map(([name]) => (
              <th key={name} scope="col">
                {name}
              </th>
            ))}
            <th />
          </tr>
        </thead>
        <tbody>
          <tr>
            <th scope="row">1</th>
            {HEADINGS.map((text, i) => (
              <td key={i}>{text}</td>
            ))}
          </tr>
          {ROWS.map((row, i) => (
            <DataRow key={row[0]} index={i + 2} row={row} />
          ))}
        </tbody>
      </Sheet>
    </SheetClip>
    <SheetScroll>
      <ScrollButton aria-label="向上滚动">
        <Tri dir="up" size={8} />
      </ScrollButton>
      <SheetThumb />
      <ScrollButton $h={16} aria-label="向下滚动">
        <Tri size={8} />
      </ScrollButton>
    </SheetScroll>
  </SheetArea>
);

const RibbonGroup = ({ label, width, launcher, children, ...body }) => (
  <Group $width={width}>
    <GroupBody {...body}>{children}</GroupBody>
    <GroupLabel>
      <span>{label}</span>
      {launcher && <Launcher />}
    </GroupLabel>
  </Group>
);

const Dropdown = ({ label, width, value }) => (
  <SelectBox $width={width}>
    <select aria-label={label} defaultValue={value}>
      <option>{value}</option>
    </select>
    <Tri size={7} />
  </SelectBox>
);

const CollapseButton = styled(PlainButton)`
  align-self: flex-end;
  margin: 0 13px 4px auto;
`;

const ExcelRibbon = () => (
  <Ribbon>
    <RibbonGroup label="剪贴板" width={112} launcher $row $pad="0 0 0 9px">
      <PasteButton>
        <PasteIcon />
        粘贴
        <Tri size={7} />
      </PasteButton>
      <Stack>
        <ToolRow>
          <Tool aria-label="剪切"><CutIcon /></Tool>
        </ToolRow>
        <ToolRow>
          <Tool aria-label="复制"><CopyIcon /></Tool>
          <Caret />
        </ToolRow>
        <ToolRow>
          <Tool aria-label="格式刷"><BrushIcon /></Tool>
        </ToolRow>
      </Stack>
    </RibbonGroup>

    <RibbonGroup label="字体" width={310} launcher $gap={9} $pad="11px 0 0 10px">
      <ToolRow $h={27}>
        <Dropdown label="字体" width={190} value="等线" />
        <Dropdown label="字号" width={50} value="11" />
        <ToolRow>
          <Tool aria-label="增大字号"><GrowFont /></Tool>
          <Tool aria-label="减小字号"><GrowFont small /></Tool>
        </ToolRow>
      </ToolRow>
      <ToolRow>
        <Tool $bold>B</Tool>
        <SerifTool $bold $italic>I</SerifTool>
        <Tool $bold $underline>U</Tool>
        <Caret />
        <ToolSep />
        <Tool aria-label="边框"><BorderIcon /></Tool>
        <Caret />
        <ToolSep />
        <Tool aria-label="填充颜色"><FillIcon /></Tool>
        <Caret />
        <Tool aria-label="字体颜色"><FontColorIcon /></Tool>
        <Caret />
        <ToolSep />
        <Tool>
          <PinyinTool>
            wén<b>文</b>
          </PinyinTool>
        </Tool>
        <Caret />
      </ToolRow>
    </RibbonGroup>

    <RibbonGroup label="对齐方式" width={208} launcher $row $pad="10px 0 0 11px">
      <Stack $gap={10}>
        <ToolRow>
          <Tool aria-label="顶端对齐"><Lines rows={[[1, 18, 3], [3, 16, 7], [1, 18, 11]]} /></Tool>
          <Tool aria-label="垂直居中"><Lines rows={[[1, 18, 6], [3, 16, 10], [1, 18, 14]]} /></Tool>
          <Tool $active aria-label="底端对齐"><Lines rows={[[1, 18, 10], [3, 16, 14], [1, 18, 18]]} /></Tool>
          <ToolGap />
          <Tool aria-label="方向"><OrientIcon /></Tool>
          <Caret w={10} />
        </ToolRow>
        <ToolRow>
          <Tool aria-label="左对齐"><Lines rows={[[1, 18, 4], [1, 12, 8], [1, 18, 12], [1, 12, 16]]} /></Tool>
          <Tool aria-label="居中"><Lines rows={[[1, 18, 4], [4, 15, 8], [1, 18, 12], [4, 15, 16]]} /></Tool>
          <Tool aria-label="右对齐"><Lines rows={[[1, 18, 4], [7, 18, 8], [1, 18, 12], [7, 18, 16]]} /></Tool>
          <ToolGap />
          <Tool aria-label="减少缩进"><IndentIcon out /></Tool>
          <Tool aria-label="增加缩进"><IndentIcon /></Tool>
        </ToolRow>
      </Stack>
      <ToolSep $h={66} />
      <Stack $gap={10}>
        <ToolRow>
          <Tool>
            <WrapTool>
              ab
              <br />c<i>↵</i>
            </WrapTool>
          </Tool>
        </ToolRow>
        <ToolRow>
          <Tool aria-label="合并后居中"><MergeIcon /></Tool>
          <Caret />
        </ToolRow>
      </Stack>
    </RibbonGroup>

    <RibbonGroup label="数字" width={114} launcher>
      <Dropdown label="数字格式" width={94} value="常规" />
      <ToolRow>
        <Tool aria-label="货币"><CurrencyIcon /></Tool>
        <Caret />
        <Tool $bold $size={18}>%</Tool>
        <Tool $bold $size={24}>,</Tool>
      </ToolRow>
      <ToolRow>
        <Tool>
          <DecimalTool>
            <b>←</b>0
            <br />
            .00
          </DecimalTool>
        </Tool>
        <Tool>
          <DecimalTool>
            .00
            <br />
            <b>→</b>0
          </DecimalTool>
        </Tool>
      </ToolRow>
    </RibbonGroup>

    <RibbonGroup label="样式" width={152}>
      <WideTool><CondIcon />条件格式<Tri /></WideTool>
      <WideTool><StyleIcon />套用表格格式<Tri /></WideTool>
      <WideTool><StyleIcon cell />单元格样式<Tri /></WideTool>
    </RibbonGroup>

    <RibbonGroup label="单元格" width={98}>
      <WideTool $push={12}><CellsIcon kind="insert" />插入<Tri /></WideTool>
      <WideTool $push={12}><CellsIcon kind="delete" />删除<Tri /></WideTool>
      <WideTool><CellsIcon kind="format" />格式<Tri /></WideTool>
    </RibbonGroup>

    <RibbonGroup label="编辑" width={102}>
      <ToolRow>
        <Tool aria-label="自动求和"><SigmaIcon /></Tool>
        <Caret w={16} />
        <Tool aria-label="排序和筛选"><SortIcon /></Tool>
        <Caret w={10} />
      </ToolRow>
      <ToolRow>
        <Tool aria-label="填充"><FillDownIcon /></Tool>
        <Caret w={16} />
        <Tool aria-label="查找和选择"><FindIcon /></Tool>
        <Caret w={10} />
      </ToolRow>
      <ToolRow>
        <Tool aria-label="清除"><EraserIcon /></Tool>
        <Caret w={16} />
      </ToolRow>
    </RibbonGroup>

    <CollapseButton aria-label="折叠功能区">
      <Chevron up />
    </CollapseButton>
  </Ribbon>
);

const FxButton = styled.button`
  color: #444;
  font-family: "Liberation Serif", serif;
  font-size: 18px;
  font-style: italic;
  font-weight: 700;
`;

const FormulaGap = styled.div`
  width: 5px;
`;

const ZoomButton = styled.button`
  width: 12px;
  font-size: 18px;
  font-weight: 700;
  line-height: 20px;
`;

const ZoomValue = styled.span`
  margin-left: 9px;
  line-height: 20px;
`;

const ExcelWindow = () => (
  <Excel>
    <GreenBar>
      <ExcelTitle>
        <QuickAccess>
          <PlainButton aria-label="保存"><SaveIcon /></PlainButton>
          <CaretSlot $w={48} aria-label="撤消"><UndoIcon color="#e6f0ea" /></CaretSlot>
          <Tri size={7} />
          <CaretSlot $w={40} aria-label="恢复"><UndoIcon flip color="#2c6d4c" /></CaretSlot>
          <Caret w={8} color="#2c6d4c" />
          <CaretSlot $w={42} $color="#e6f0ea" aria-label="自定义快速访问工具栏">
            <Icon w={8} h={10}>
              <path d="M1 1h6" />
              <path d="M0 4h8L4 9z" fill="currentColor" stroke="none" />
            </Icon>
          </CaretSlot>
        </QuickAccess>
        <DocTitle>广州租房数据.xlsx - Excel</DocTitle>
        <ExcelControls>
          <LoginButton>登录</LoginButton>
          <ChromeButton aria-label="功能区显示选项">
            <Icon w={16} h={14} strokeWidth="1"><path d="M1 1h14v11H1zM1 4h14M8 11V6M6 8l2-2 2 2" /></Icon>
          </ChromeButton>
          <ChromeButton aria-label="最小化">
            <Icon w={12} strokeWidth="1"><path d="M0 6h12" /></Icon>
          </ChromeButton>
          <ChromeButton aria-label="最大化">
            <Icon w={14} strokeWidth="1"><path d="M1 1h11v11H1z" /></Icon>
          </ChromeButton>
          <ChromeButton aria-label="关闭">
            <Icon w={14} strokeWidth="1"><path d="M1 1l12 12M13 1L1 13" /></Icon>
          </ChromeButton>
        </ExcelControls>
      </ExcelTitle>
      <RibbonTabs>
        <RibbonTab $after={8}>文件</RibbonTab>
        <RibbonTab $active>开始</RibbonTab>
        {MENU.map((name) => (
          <RibbonTab key={name}>{name}</RibbonTab>
        ))}
        <RibbonTab $before="3px"><BulbIcon />&nbsp;告诉我</RibbonTab>
        <RibbonTab $before="auto"><ShareIcon />共享</RibbonTab>
      </RibbonTabs>
    </GreenBar>
    <ExcelRibbon />
    <FormulaRow>
      <FormulaBox $width={122}>
        <input aria-label="名称框" defaultValue="M2" />
        <Tri size={9} />
      </FormulaBox>
      <Grip>
        <Icon w={4} h={16} strokeWidth="2"><path d="M2 1v14" strokeDasharray="2 4" /></Icon>
      </Grip>
      <FormulaBox $width={132} $tools>
        <PlainButton aria-label="取消">
          <Icon w={14} stroke="#b0b0b0" strokeWidth="2"><path d="M1 2l12 10M13 2L1 12" /></Icon>
        </PlainButton>
        <PlainButton aria-label="输入">
          <Icon w={16} h={14} stroke="#b0b0b0" strokeWidth="3"><path d="M1 8l4 4L14 2" /></Icon>
        </PlainButton>
        <FxButton aria-label="插入函数">fx</FxButton>
      </FormulaBox>
      <FormulaGap />
      <FormulaBox $grow>
        <input aria-label="编辑栏" defaultValue="=VLOOKUP(A2,ZF_从化区_JW!A2:D3035,4,)" />
        <Chevron />
      </FormulaBox>
    </FormulaRow>
    <SheetTable />
    <TabBar>
      <TabNav>
        <Tri dir="left" size={9} />
        <Tri dir="right" size={9} />
        <span>…</span>
      </TabNav>
      {SHEETS.map((name) => (
        <SheetTab key={name} $active={name === "ZF_从化区"}>
          {name}
        </SheetTab>
      ))}
      <SheetTab>ZF&nbsp; …</SheetTab>
      <TabTail>
        <PlainButton aria-label="新工作表">
          <Icon w={20} stroke="#a5a5a5"><circle cx="10" cy="10" r="9" /><path d="M10 5v10M5 10h10" strokeWidth="2" /></Icon>
        </PlainButton>
        <Grip>
          <Icon w={4} h={16} strokeWidth="2"><path d="M2 1v14" strokeDasharray="2 4" /></Icon>
        </Grip>
        <HScroll>
          <ScrollButton aria-label="向左滚动"><Tri dir="left" size={8} /></ScrollButton>
          <HThumb />
          <ScrollButton aria-label="向右滚动"><Tri dir="right" size={8} /></ScrollButton>
        </HScroll>
      </TabTail>
    </TabBar>
    <StatusBar>
      <Icon w={18} h={18} stroke="#555" strokeWidth="1">
        <circle cx="4" cy="4" r="3" fill="#444" />
        <path d="M9 3h7v13H2V9" strokeWidth="2" />
        <path d="M5 10h9M5 13h9" strokeWidth="2" strokeDasharray="2 1" />
      </Icon>
      <ViewButton $first $active aria-label="普通">
        <Icon w={18} stroke="#555"><path d="M1 1h15v15H1zM6 1v15M11 1v15M1 6h15M1 11h15" /></Icon>
      </ViewButton>
      <ViewButton aria-label="页面布局">
        <Icon w={18} stroke="#555"><path d="M1 1h15v15H1zM5 4h8v9H5zM7 7h4M7 10h4" /></Icon>
      </ViewButton>
      <ViewButton aria-label="分页预览">
        <Icon w={18} stroke="#555"><path d="M1 1h15v15H1zM1 10h10V1M6 1v9" /></Icon>
      </ViewButton>
      <ZoomButton>−</ZoomButton>
      <ZoomRange type="range" aria-label="缩放" min="0" max="200" defaultValue="100" />
      <ZoomButton>+</ZoomButton>
      <ZoomValue>100%</ZoomValue>
    </StatusBar>
  </Excel>
);

const App = () => {
  const [position, setPosition] = useState(347);
  const [volume, setVolume] = useState(21);

  return (
    <Page>
      <GlobalStyle />
      <Player>
        <PlayerTitle>
          <BrandButton>
            Potplayer
            <Tri size={8} />
          </BrandButton>
          <Format>MP4</Format>
          <FileName>[13/61] 1.12、数据库与Excel多表关联交集.mp4</FileName>
          <WindowButtons>
            <Icon w={52} h={14} stroke="none">
              <path d="M0 6h38v2H0z" fill="#74778a" />
              <path d="M37 3h15v8H37z" fill="#d5d7e2" />
            </Icon>
            <PlainButton aria-label="最小化">
              <Icon w={12} h={14} strokeWidth="3"><path d="M0 12h12" /></Icon>
            </PlainButton>
            <PlainButton aria-label="还原">
              <Icon w={16} strokeWidth="2"><path d="M4 5V2h11v8h-3M1 7h11v7H1zM1 8h11" /></Icon>
            </PlainButton>
            <PlainButton aria-label="全屏">
              <Icon w={14} strokeWidth="2"><path d="M1 5V1h4M9 1h4v4M13 9v4H9M5 13H1V9M3 3l3 3M11 3L8 6M3 11l3-3M11 11L8 8" strokeWidth="1.500" /></Icon>
            </PlainButton>
            <PlainButton aria-label="关闭">
              <Icon w={14} strokeWidth="3"><path d="M2 2l10 10M12 2L2 12" /></Icon>
            </PlainButton>
          </WindowButtons>
        </PlayerTitle>

        <Stage>
          <PlayState>Paused</PlayState>
          <Desktop>
            <BackWindow>
              <BackStrip>
                <BackIcons>
                  <Icon w={12} stroke="#333"><path d="M1 1l10 10M11 1L1 11" /></Icon>
                  <Icon w={12} stroke="#444"><path d="M1 6l5-4 5 4v4H8L6 7l-2 3H1z" /></Icon>
                </BackIcons>
                <BackPanel />
                <PinSlot>
                  <Icon w={22} h={16} stroke="#445"><path d="M7 1v8M5 10h12M15 1v9M13 1v9M7 1h8M11 10v5" /></Icon>
                </PinSlot>
                <BackScroll>
                  <ScrollButton $flat $h={20} aria-label="向上滚动"><Tri dir="up" size={10} /></ScrollButton>
                  <BackThumb />
                  <ScrollButton $flat aria-label="向下滚动"><Tri size={10} /></ScrollButton>
                </BackScroll>
              </BackStrip>
              <BackStatus>
                <Icon w={12} stroke="#c9cdd8" strokeWidth="2">
                  <path d="M8 1h2M4 5h2M8 5h2M0 9h2M4 9h2M8 9h2" />
                </Icon>
              </BackStatus>
            </BackWindow>
            <ExcelWindow />
            <Watermark>关注：FocusBI公众号</Watermark>
            <ImeBar>
              <ImeStrip />
            </ImeBar>
          </Desktop>
        </Stage>

        <SeekRow>
          <Range
            type="range"
            aria-label="播放进度"
            min="0"
            max="702"
            value={position}
            onChange={(e) => setPosition(Number(e.target.value))}
            $grow
            $track={7}
            $thumb={17}
            $on="#2f9ff7"
            $off="#646679"
            $fill={(position / 702) * 100}
          />
          <VolumeIcon>
            <Icon w={24} h={20} stroke="#2c2d36">
              <path d="M2 7h4l6-5v16l-6-5H2z" fill="#17181d" stroke="none" />
              <path d="M14 7c2 2 2 4 0 6M16 5c4 3 4 7 0 10M19 2c5 4 5 12 0 16" />
            </Icon>
          </VolumeIcon>
          <Range
            type="range"
            aria-label="音量"
            min="0"
            max="100"
            value={volume}
            onChange={(e) => setVolume(Number(e.target.value))}
            $width="119px"
            $track={7}
            $thumb={15}
            $on="#2f9ff7"
            $off="#262730"
            $fill={volume}
          />
        </SeekRow>

        <ControlRow>
          <Transport>
            <PlainButton aria-label="播放">
              <Icon w={18}><path d="M1 0l17 9L1 18z" fill="#eef0f7" stroke="none" /></Icon>
            </PlainButton>
            <PlainButton aria-label="停止">
              <Icon w={18}><path d="M3 3h12v12H3z" fill="#eef0f7" stroke="none" /></Icon>
            </PlainButton>
            <PlainButton aria-label="上一个">
              <Icon w={18}><path d="M3 3h3v12H3zM15 3v12L6 9z" fill="#eef0f7" stroke="none" /></Icon>
            </PlainButton>
            <PlainButton aria-label="下一个">
              <Icon w={18}><path d="M12 3h3v12h-3zM3 3v12l9-6z" fill="#eef0f7" stroke="none" /></Icon>
            </PlainButton>
            <PlainButton aria-label="打开">
              <Icon w={18}><path d="M9 3l6 7H3zM3 12h12v3H3z" fill="#eef0f7" stroke="none" /></Icon>
            </PlainButton>
          </Transport>
          <Clock>
            00:05:47
            <Duration>/ 00:11:42</Duration>
            S/W
          </Clock>
          <PanelButton aria-label="播放列表">
            <Icon w={14} h={16}><path d="M1 1h12v14H1z" fill="#eef0f7" stroke="none" /><path d="M4 5h6M4 8h6M4 11h6" stroke="#444" /></Icon>
          </PanelButton>
          <PanelButton aria-label="设置">
            <Icon w={16} stroke="#eef0f7"><circle cx="8" cy="8" r="4" strokeWidth="3" /><circle cx="8" cy="8" r="6" strokeWidth="3" strokeDasharray="2.400 2.300" /></Icon>
          </PanelButton>
        </ControlRow>
      </Player>

      <Taskbar>
        <TaskButton aria-label="开始">
          <Icon w={24} stroke="none">
            <path d="M0 3l10-1v10H0zM11 2l13-2v12H11zM0 13h10v9L0 21zM11 13h13v11l-13-2z" fill="#fff" />
          </Icon>
        </TaskButton>
        <SearchBox>
          <Icon w={25} h={26} stroke="#222" strokeWidth="2">
            <circle cx="16" cy="9" r="8" />
            <path d="M10 15L1 25" />
          </Icon>
          <input type="text" placeholder="在这里输入你要搜索的内容" aria-label="搜索" />
        </SearchBox>
        <TaskButton aria-label="Cortana">
          <Icon w={24} strokeWidth="3"><circle cx="12" cy="12" r="10" /></Icon>
        </TaskButton>
        <TaskButton aria-label="任务视图">
          <Icon w={26}>
            <path d="M2 1v4h14V1M2 8h14v10H2zM2 25v-4h14v4M22 1v4M22 12v13" />
            <path d="M20 7h4v4h-4z" fill="#fff" stroke="none" />
          </Icon>
        </TaskButton>
        <Apps>
          <AppButton aria-label="文件资源管理器"><ExplorerIcon /></AppButton>
          <AppButton aria-label="Chrome"><ChromeIcon /></AppButton>
          <AppButton aria-label="数据库工具"><DbToolsIcon /></AppButton>
          <AppButton $active aria-label="Potplayer"><PotIcon /></AppButton>
          <AppButton aria-label="Excel"><ExcelIcon /></AppButton>
        </Apps>
        <Tray>
          <TrayButton aria-label="显示隐藏的图标">
            <Icon w={18} h={12}><path d="M1 10l8-8 8 8" /></Icon>
          </TrayButton>
          <TrayButton $w={37} aria-label="电池">
            <Icon w={24} h={18}>
              <path d="M9 5h13v10H7v-4M23 8v4M2 1v4M6 1v4M1 5h6v3c0 2-6 2-6 0zM4 10v5" />
              <path d="M7 9h3v5H7z" fill="#fff" stroke="none" />
            </Icon>
          </TrayButton>
          <TrayButton aria-label="网络">
            <Icon w={20} stroke="#cbd1da">
              <path d="M1 19C1 9 9 1 19 1M5 19C5 11 11 5 19 5M9 19c0-6 4-10 10-10M13 19c0-4 2-6 6-6" />
              <circle cx="17" cy="17" r="2" fill="#fff" stroke="none" />
            </Icon>
          </TrayButton>
          <TrayButton $w={34} aria-label="音量">
            <Icon w={24} h={20}>
              <path d="M1 7h3l5-5v16l-5-5H1zM12 8c1 1 1 3 0 4M15 5c3 3 3 7 0 10" />
              <path d="M19 3c4 4 4 10 0 14" stroke="#8d97a6" />
            </Icon>
          </TrayButton>
          <TrayButton $w={34} aria-label="文件搜索">
            <Icon w={20} h={22}>
              <path d="M3 0h12l4 4v18H3z" fill="#fff" stroke="none" />
              <circle cx="11" cy="9" r="5" stroke="#e98a0c" strokeWidth="3" />
              <path d="M8 13l-6 6" stroke="#e98a0c" strokeWidth="4" />
            </Icon>
          </TrayButton>
          <TrayButton $w={36} aria-label="输入法">
            <ImeMode>英</ImeMode>
          </TrayButton>
          <TrayButton $w={54} aria-label="搜狗输入法">
            <SogouIcon />
          </TrayButton>
          <DateTime>
            15:06
            <br />
            2020/1/28
          </DateTime>
          <Notice aria-label="通知">
            <Icon w={24} h={26}>
              <path d="M0 0h24v18H12l-5 6v-6H0z" fill="#fff" stroke="none" />
              <path d="M5 5h14M5 9h14M5 13h10" stroke="#1b2945" />
            </Icon>
            <Badge>1</Badge>
          </Notice>
        </Tray>
      </Taskbar>
    </Page>
  );
};

export default App;
